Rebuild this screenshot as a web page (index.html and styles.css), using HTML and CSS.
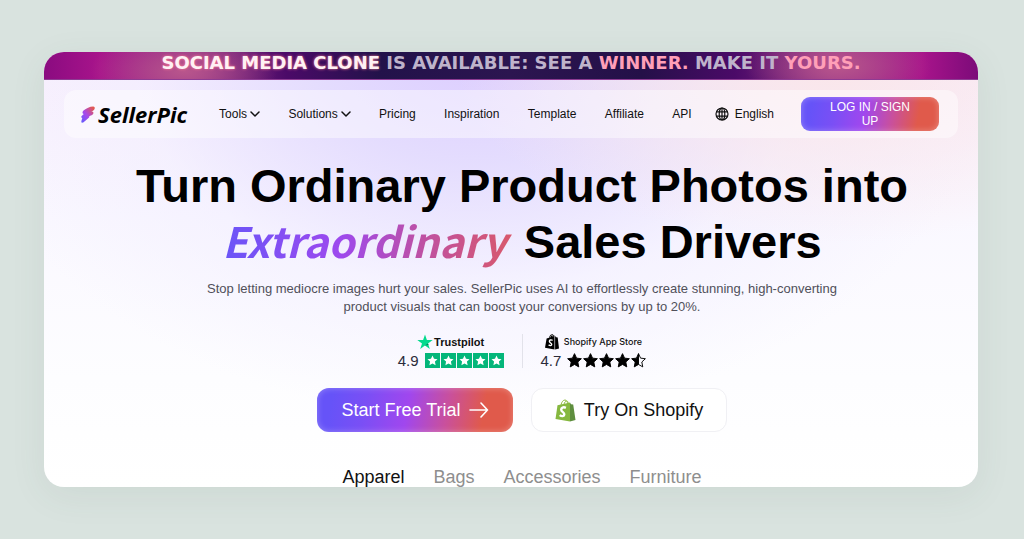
FILE: index.html
```html
<!DOCTYPE html>
<html lang="en">

<head>
    <meta charset="utf-8">
    <meta name="viewport" content="width=device-width, initial-scale=1.0">
    <title>SellerPic</title>
    <link rel="stylesheet" href="styles.css">
</head>

<body>
    <!-- shared shapes -->
    <svg class="sprite" aria-hidden="true">
        <symbol id="star" viewBox="0 0 24 24">
            <path d="M12 1l3.3 7.2 7.7.9-5.700 5.300 1.500 7.800L12 18.300l-6.800 3.900 1.500-7.800L1 9.100l7.700-.9z" />
        </symbol>
        <symbol id="chevron" viewBox="0 0 10 6">
            <path d="M1 1l4 4 4-4" fill="none" stroke="currentColor" stroke-width="1.5" stroke-linecap="round" stroke-linejoin="round" />
        </symbol>
    </svg>

    <div class="window">
        <p class="banner">
            <span class="glow">SOCIAL MEDIA CLONE</span>
            <span class="silver">IS AVAILABLE: SEE A</span>
            <span class="pink">WINNER.</span>
            <span class="silver">MAKE IT</span>
            <span class="pink">YOURS.</span>
        </p>

        <header class="topbar">
            <a href="#" class="logo">
                <svg width="14" height="17" viewBox="0 0 14 17">
                    <defs>
                        <linearGradient id="bolt" x1="1" y1="0" x2="0" y2="1">
                            <stop offset="0.1" stop-color="#e2584f" />
                            <stop offset="0.55" stop-color="#a949e8" />
                            <stop offset="1" stop-color="#5f5cff" />
                        </linearGradient>
                    </defs>
                    <path fill="url(#bolt)" d="M13.600 1.200C14.200 2.700 13 4.400 11.500 4.900L10.300 5.400C11.600 5.400 12.700 6 12.400 7.300C12.200 8.500 10.900 9.200 9.800 9.600L8.200 10.200C8.500 10.800 8.100 11.500 7.500 12.100L2.600 16.300C1.400 17.200.1 16.400.4 15.100L1.300 12.100C.1 11.700 0 10.500.9 9.700L2.800 8C1.300 7.800 1 5.900 2.500 4.600C5.400 2.100 8.700.7 12.100.5C12.800.5 13.400.7 13.600 1.200Z" />
                </svg>
                <span>SellerPic</span>
            </a>
            <nav>
                <a href="#">Tools <svg width="10" height="6"><use href="#chevron" /></svg></a>
                <a href="#">Solutions <svg width="10" height="6"><use href="#chevron" /></svg></a>
                <a href="#">Pricing</a>
                <a href="#">Inspiration</a>
                <a href="#">Template</a>
                <a href="#">Affiliate</a>
                <a href="#">API</a>
            </nav>
            <button class="language">
                <svg width="14" height="14" viewBox="0 0 14 14" fill="none" stroke="#111" stroke-width="1.200">
                    <circle cx="7" cy="7" r="6" />
                    <ellipse cx="7" cy="7" rx="2.800" ry="6" />
                    <path d="M7 1v12M1.500 4.800h11M1.500 9.200h11" />
                </svg>
                English
            </button>
            <button class="login">LOG IN / SIGN UP</button>
        </header>

        <main>
            <h1>Turn Ordinary Product Photos into <br><em>Extraordinary</em> Sales Drivers</h1>
            <p class="intro">Stop letting mediocre images hurt your sales. SellerPic uses AI to effortlessly create stunning, high-converting product visuals that can boost your conversions by up to 20%.</p>

            <section class="ratings">
                <div class="rating">
                    <p class="brand trustpilot">
                        <svg width="16" height="16" viewBox="0 0 16 16">
                            <path fill="#04da8d" d="M8 .5l1.900 5.500h5.800l-4.700 3.500 1.800 5.500L8 11.600 3.200 15 5 9.500.3 6h5.800z" />
                            <path fill="#0b7a55" d="M11 9.500l.5 1.500L8 11.600z" />
                        </svg>
                        Trustpilot
                    </p>
                    <p class="score">4.9
                        <span class="stars green">
                            <svg><use href="#star" /></svg>
                            <svg><use href="#star" /></svg>
                            <svg><use href="#star" /></svg>
                            <svg><use href="#star" /></svg>
                            <svg><use href="#star" /></svg>
                        </span>
                    </p>
                </div>
                <div class="rating">
                    <p class="brand appstore">
                        <svg width="14" height="16" viewBox="0 0 14 16">
                            <path d="M1.600 4.500L4 3.800C4.500 1.600 5.700.3 7 .3c.8 0 1.300.5 1.700 1.300L9.500 1.500V15.600L0 13.800z" />
                            <path d="M10.100 2l1.100 1.200 1.500.2L14 14.500l-3.900 1.100z" />
                            <path d="M5 3.500C5.400 2 6.200 1.200 7 1.200c.5 0 .8.5.9 1.400" fill="none" stroke="#fff" stroke-width=".6" />
                            <path d="M7.600 6.300C5.800 5.400 4.300 6.100 4.400 7.400c.1 1.600 2.500 1.700 2.300 3.200-.2 1.200-1.700 1.300-3.100.3" fill="none" stroke="#fff" stroke-width="1.400" />
                        </svg>
                        Shopify App Store
                    </p>
                    <p class="score">4.7
                        <span class="stars black">
                            <svg><use href="#star" /></svg>
                            <svg><use href="#star" /></svg>
                            <svg><use href="#star" /></svg>
                            <svg><use href="#star" /></svg>
                            <svg viewBox="0 0 24 24">
                                <path d="M12 1v17.300l-6.800 3.900 1.500-7.800L1 9.100l7.700-.9z" />
                                <path d="M12 1l3.300 7.200 7.700.9-5.700 5.300 1.500 7.800-6.800-3.900" fill="none" />
                            </svg>
                        </span>
                    </p>
                </div>
            </section>

            <div class="actions">
                <button class="trial">
                    Start Free Trial
                    <svg width="20" height="16" viewBox="0 0 20 16" fill="none" stroke="#fff" stroke-width="1.600" stroke-linecap="round" stroke-linejoin="round">
                        <path d="M1 8h17.500M12 1l6.500 7-6.500 7" />
                    </svg>
                </button>
                <button class="shopify">
                    <svg width="21" height="23" viewBox="0 0 21 23">
                        <path d="M6 6C6.600 2.800 8.300 1 10 1c1.500 0 2.500 1.700 2.700 4M9 5.500c.3-2 1.500-3.500 2.600-3.500 1 0 1.600 1 1.700 2.500" fill="none" stroke="#95bf47" stroke-width="1" />
                        <path fill="#86b83f" d="M2.500 6.200L15 3.500V22.500L.5 20z" />
                        <path fill="#5e8e3e" d="M15 3.500l1 1.700 2.200.3L20.500 21 15 22.500z" />
                        <path d="M10.900 8.800C8.300 7.600 6.100 8.700 6.200 10.700c.1 2.300 3.400 2.700 3.100 4.800-.2 1.900-2.600 2.100-4.600.6" fill="none" stroke="#fff" stroke-width="2.400" />
                    </svg>
                    Try On Shopify
                </button>
            </div>

            <nav class="tabs">
                <a href="#" class="active">Apparel</a>
                <a href="#">Bags</a>
                <a href="#">Accessories</a>
                <a href="#">Furniture</a>
            </nav>
        </main>
    </div>
</body>

</html>
```
FILE: styles.css
```css
* {
    margin: 0;
    padding: 0;
    box-sizing: border-box;
}

body {
    height: 100vh;
    padding: 52px 46px 52px 44px;
    background-color: #d9e3df;
    font-family: "Liberation Sans", Arial, sans-serif;
    color: #111;
}

a {
    color: inherit;
    text-decoration: none;
}

button {
    border: none;
    font-family: inherit;
    cursor: pointer;
}

svg {
    flex: none;
}

.sprite {
    position: absolute;
    width: 0;
    height: 0;
}

.window {
    height: 100%;
    overflow: hidden;
    border-radius: 20px;
    background:
        radial-gradient(ellipse 40% 40% at 84% 4%, #fae6ea 0%, rgba(251, 230, 234, 0) 100%),
        radial-gradient(ellipse 56% 84% at 46% 0%, #dccdff 0%, rgba(226, 218, 254, 0.9) 30%, rgba(240, 236, 255, 0.5) 65%, rgba(255, 255, 255, 0) 100%),
        linear-gradient(#f8eefd 0%, #faf8ff 38%, #fdfdff 75%, #fff 100%);
    box-shadow: 0 8px 36px rgba(60, 90, 80, 0.08);
}

/* banner */
.banner {
    height: 28px;
    border-bottom: 1px solid #8d3c93;
    background:
        radial-gradient(ellipse 10% 160% at 15% 70%, #b9568c 0%, rgba(185, 86, 140, 0) 100%),
        radial-gradient(ellipse 10% 160% at 85% 50%, #b9568c 0%, rgba(185, 86, 140, 0) 100%),
        linear-gradient(90deg, #8a0b80 0%, #a8148b 6%, #8c2f86 16%, #4b0a68 26%, #22124a 36%, #2c1550 50%, #241048 64%, #4b0a68 74%, #8c2f86 84%, #a8148b 94%, #7c0b79 100%);
    text-align: center;
    font-family: "DejaVu Sans", sans-serif;
    font-size: 18px;
    font-weight: bold;
    line-height: 22px;
    white-space: nowrap;
}

.glow {
    color: #fff1f4;
    text-shadow: 0 0 3px #ff7d96;
}

.silver {
    color: #bfb3cb;
}

.pink {
    color: #ff9fb8;
}

/* top bar */
.topbar {
    display: flex;
    align-items: center;
    height: 48px;
    margin: 10px 20px 0;
    padding: 0 19px 0 17px;
    border-radius: 12px;
    background-color: rgba(255, 255, 255, 0.45);
    font-size: 12px;
}

.logo {
    display: flex;
    align-items: center;
    gap: 3px;
    font-family: "Open Sans", sans-serif;
    font-size: 22px;
    font-style: italic;
    font-weight: 700;
    line-height: 24px;
    color: #000;
}

.topbar nav {
    display: flex;
    flex: 1;
    justify-content: space-between;
    margin: 0 23px 0 32px;
}

.topbar nav a {
    display: flex;
    align-items: center;
    gap: 3px;
}

.language {
    display: flex;
    align-items: center;
    gap: 6px;
    background: none;
    font-size: 12px;
    color: #111;
}

.login,
.trial {
    background: linear-gradient(100deg, #6653f8 8%, #7a4ff5 25%, #a047ee 46%, #c9509c 66%, #e05a4b 84%);
    box-shadow: inset 0 0 6px rgba(255, 255, 255, 0.3);
    color: #fff;
}

.login {
    width: 138px;
    height: 34px;
    margin-left: 27px;
    padding: 0 24px;
    border-radius: 9px;
    font-size: 12px;
    line-height: 14px;
}

/* hero */
main {
    padding: 20px 0 0 22px;
    text-align: center;
}

h1 {
    font-size: 47px;
    line-height: 56px;
    color: #000;
}

/* extra room on the right keeps the slanted y inside the gradient */
h1 em {
    margin-right: -4px;
    padding-right: 8px;
    background: linear-gradient(90deg, #6a55f8, #9d49ee 40%, #c0519f 70%, #d9596a);
    background-clip: text;
    -webkit-background-clip: text;
    font-family: "Noto Sans CJK SC", sans-serif;
    font-size: 42px;
    line-height: 44px;
    color: transparent;
}

.intro {
    max-width: 660px;
    margin: 10px auto 0;
    font-size: 13px;
    line-height: 18px;
    color: #50505a;
}

.ratings {
    display: flex;
    justify-content: center;
    margin-top: 18px;
}

.rating {
    height: 34px;
    padding: 0 18px;
}

.rating + .rating {
    border-left: 1px solid #e2e2ea;
}

.brand {
    display: flex;
    align-items: center;
    justify-content: center;
    height: 15px;
}

.trustpilot {
    gap: 1px;
    font-size: 11px;
    font-weight: bold;
}

.appstore {
    gap: 5px;
    font-family: Inter, sans-serif;
    font-size: 9px;
    font-weight: 500;
}

.score {
    display: flex;
    align-items: center;
    gap: 6px;
    height: 22px;
    font-size: 15px;
    color: #2b2b3a;
}

.stars {
    display: flex;
    gap: 1px;
}

.green svg {
    width: 15px;
    height: 15px;
    padding: 2px;
    background-color: #04b67a;
    fill: #fff;
}

.black svg {
    width: 15px;
    height: 15px;
    overflow: visible;
    fill: #000;
    stroke: #000;
    stroke-width: 1.5;
    stroke-linejoin: round;
}

.actions {
    display: flex;
    justify-content: center;
    gap: 18px;
    margin-top: 20px;
}

.actions button {
    display: flex;
    align-items: center;
    justify-content: center;
    gap: 8px;
    width: 196px;
    height: 44px;
    border-radius: 12px;
    font-size: 18px;
}

.shopify {
    border: 1px solid #f0f0f4;
    background-color: #fff;
    color: #111;
}

.tabs {
    display: flex;
    justify-content: center;
    gap: 29px;
    margin-top: 35px;
    font-size: 18px;
    line-height: 20px;
    color: #8e8e8e;
}

.active {
    color: #111;
}
```
